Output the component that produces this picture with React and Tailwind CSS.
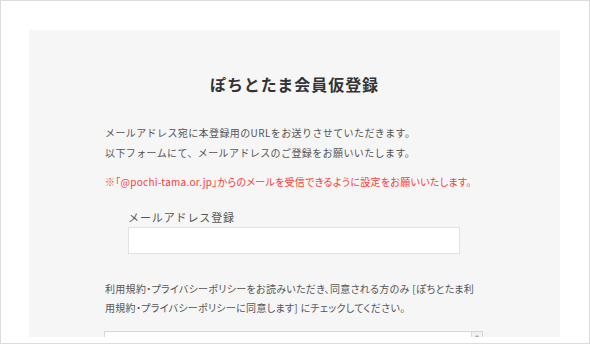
const font = { fontFamily: '"Noto Sans CJK JP", "Noto Sans", sans-serif' };

const App = () => {
  return (
    <div
      className="w-[590px] h-[344px] bg-white border border-[#dcdcdc] pt-[29px] pl-[28px] pr-[29px] overflow-hidden"
      style={font}
    >
      <div className="h-[307px] bg-[#f6f6f6] overflow-hidden px-[76px] pt-[42px]">
        <h1 className="text-center text-[16px] leading-[24px] font-bold text-[#333] tracking-[0.06em]">
          ぽちとたま会員仮登録
        </h1>

        <div className="mt-[27px] text-[10px] leading-[20px] text-[#555] tracking-[0.04em]">
          <p>メールアドレス宛に本登録用のURLをお送りさせていただきます。</p>
          <p>以下フォームにて、メールアドレスのご登録をお願いいたします。</p>
        </div>

        <p className="mt-[9px] text-[10px] leading-[20px] text-[#ff3b3b] [font-feature-settings:'palt'] tracking-[0.028em] whitespace-nowrap">
          ※「@pochi-tama.or.jp」からのメールを受信できるように設定をお願いいたします。
        </p>

        <div className="mt-[16px] pl-[23px]">
          <label className="block text-[11px] leading-[18px] text-[#555] tracking-[0.08em]">
            メールアドレス登録
          </label>
          <input
            type="email"
            className="mt-[1px] block w-[332px] h-[27px] bg-white border border-[#e2e2e2] outline-none"
          />
        </div>

        <p className="mt-[25px] text-[10px] leading-[19px] text-[#555] [font-feature-settings:'palt'] tracking-[0.03em] whitespace-nowrap">
          利用規約・プライバシーポリシーをお読みいただき、同意される方のみ [ぽちとたま利
          <br />
          用規約・プライバシーポリシーに同意します] にチェックしてください。
        </p>

        <div className="mt-[14px] -ml-px w-[379px] h-[40px] bg-white border border-[#d6d6d6] flex justify-end">
          <div className="w-[11px] h-full bg-[#f1f1f1] border-l border-[#dadada] flex justify-center pt-[3px]">
            <div className="w-0 h-0 border-l-[3px] border-r-[3px] border-b-[3px] border-l-transparent border-r-transparent border-b-[#a3a3a3]" />
          </div>
        </div>
      </div>
    </div>
  );
};

export default App;
